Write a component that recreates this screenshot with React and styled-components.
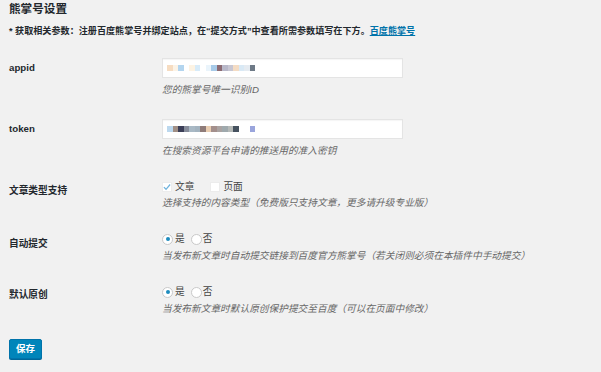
import React from "react";
import styled, { createGlobalStyle } from "styled-components";

const GlobalStyle = createGlobalStyle`
  html, body {
    margin: 0;
    padding: 0;
    background: #f1f1f1;
  }
  body {
    font-family: "Liberation Sans", "Noto Sans CJK SC", sans-serif;
    color: #444;
  }
`;

const Page = styled.div`
  padding: 0 9px;
  width: 601px;
  height: 372px;
  box-sizing: border-box;
  overflow: hidden;
`;

const Title = styled.h2`
  margin: 0;
  font-size: 11.6px;
  line-height: 17px;
  font-weight: 700;
  color: #23282d;
`;

const Note = styled.p`
  margin: 7px 0 0;
  font-size: 9.1px;
  line-height: 14px;
  font-weight: 600;
  color: #23282d;
  white-space: nowrap;
`;

const Link = styled.a`
  color: #0073aa;
  text-decoration: underline;
`;

const Table = styled.div`
  margin-top: 9px;
  display: flex;
  flex-direction: column;
`;

const Row = styled.div`
  display: grid;
  grid-template-columns: 153px 1fr;
`;

const Label = styled.div`
  padding-top: ${(p) => p.$top}px;
  font-size: 9.7px;
  line-height: 14px;
  font-weight: 600;
  color: #23282d;
`;

const Field = styled.div`
  padding: 11px 0;
  display: flex;
  flex-direction: column;
`;

const InputBox = styled.div`
  width: 241px;
  height: 20px;
  box-sizing: border-box;
  background: #fff;
  border: 1px solid #e4e4e4;
  box-shadow: inset 0 1px 1px rgba(0, 0, 0, 0.04);
  display: flex;
  align-items: center;
  padding-left: 4px;
`;

const Mosaic = styled.div`
  display: flex;
  height: 6px;
`;

const Pixel = styled.span`
  width: 5.5px;
  height: 6px;
  background: ${(p) => p.$c};
`;

const Desc = styled.p`
  margin: ${(p) => p.$gap}px 0 0;
  font-size: 9.7px;
  line-height: 14px;
  font-style: italic;
  color: #666;
  white-space: nowrap;
`;

const Options = styled.div`
  display: flex;
  align-items: center;
  height: 14px;
  font-size: 9.7px;
  line-height: 14px;
  color: #444;
`;

const Choice = styled.label`
  display: flex;
  align-items: center;
  gap: ${(p) => p.$gap}px;
  margin-right: ${(p) => p.$after}px;
`;

const CheckBox = styled.span`
  width: 10px;
  height: 10px;
  box-sizing: border-box;
  background: #fff;
  border: 1px solid #ececec;
  display: flex;
  align-items: center;
  justify-content: center;
`;

const Radio = styled.span`
  width: 11px;
  height: 11px;
  box-sizing: border-box;
  border-radius: 50%;
  background: #fff;
  border: 1px solid #c9c9c9;
  display: flex;
  align-items: center;
  justify-content: center;
  &::after {
    content: "";
    width: 4px;
    height: 4px;
    border-radius: 50%;
    background: ${(p) => (p.$on ? "#1e8cbe" : "transparent")};
  }
`;

const SaveButton = styled.button`
  margin-top: 12px;
  width: 33px;
  height: 20px;
  padding: 0;
  background: #0085ba;
  border: 1px solid #0073aa;
  border-radius: 2px;
  box-shadow: 0 1px 0 #006799;
  color: #fff;
  font-family: "Liberation Sans", "Noto Sans CJK SC", sans-serif;
  font-size: 9.5px;
  font-weight: 700;
  line-height: 18px;
`;

const appidPixels = [
  "#f6dcc1", "#fcf3e6", "#b3d5ef", "transparent", "#fdf3e3", "#d7ebf9",
  "transparent", "#eaf4fb", "#a7cae8", "#8c6b73", "#b8b8c9", "#c8c7d3",
  "#f4dcc4", "#d9e9f5", "#e5ebf1", "#6e7a87",
];

const tokenPixels = [
  "#bcd8ee", "#a18f85", "#3b3e57", "#868c9a", "#a9b9c5", "#a3b3bf",
  "#8e7b79", "#e9cdb1", "#a38f8c", "#aaa3a2", "#9fa9ad", "#b6bab8",
  "#46525f", "transparent", "transparent", "#9aa5dc",
];

const Check = () => (
  <svg width="9" height="8" viewBox="0 0 9 8">
    <path d="M1 4.2 L3.4 6.6 L8 1.2" fill="none" stroke="#6fb3dd" strokeWidth="1.4" />
  </svg>
);

const TextRow = ({ label, pixels, desc }) => (
  <Row>
    <Label $top={14}>{label}</Label>
    <Field>
      <InputBox>
        <Mosaic>
          {pixels.map((c, i) => (
            <Pixel key={i} $c={c} />
          ))}
        </Mosaic>
      </InputBox>
      <Desc $gap={5}>{desc}</Desc>
    </Field>
  </Row>
);

const YesNoRow = ({ label, desc, top }) => (
  <Row>
    <Label $top={top}>{label}</Label>
    <Field>
      <Options>
        <Choice $gap={2} $after={6}>
          <Radio $on />是
        </Choice>
        <Choice $gap={1} $after={0}>
          <Radio />否
        </Choice>
      </Options>
      <Desc $gap={3}>{desc}</Desc>
    </Field>
  </Row>
);

export default function App() {
  return (
    <Page>
      <GlobalStyle />
      <Title>熊掌号设置</Title>
      <Note>
        * 获取相关参数：注册百度熊掌号并绑定站点，在“提交方式”中查看所需参数填写在下方。
        <Link href="#">百度熊掌号</Link>
      </Note>
      <Table>
        <TextRow label="appid" pixels={appidPixels} desc="您的熊掌号唯一识别ID" />
        <TextRow label="token" pixels={tokenPixels} desc="在搜索资源平台申请的推送用的准入密钥" />
        <Row>
          <Label $top={15}>文章类型支持</Label>
          <Field>
            <Options>
              <Choice $gap={3} $after={16}>
                <CheckBox>
                  <Check />
                </CheckBox>
                文章
              </Choice>
              <Choice $gap={3} $after={0}>
                <CheckBox />
                页面
              </Choice>
            </Options>
            <Desc $gap={2}>选择支持的内容类型（免费版只支持文章，更多请升级专业版）</Desc>
          </Field>
        </Row>
        <YesNoRow
          label="自动提交"
          top={16}
          desc="当发布新文章时自动提交链接到百度官方熊掌号（若关闭则必须在本插件中手动提交）"
        />
        <YesNoRow label="默认原创" top={14} desc="当发布新文章时默认原创保护提交至百度（可以在页面中修改）" />
      </Table>
      <SaveButton>保存</SaveButton>
    </Page>
  );
}
